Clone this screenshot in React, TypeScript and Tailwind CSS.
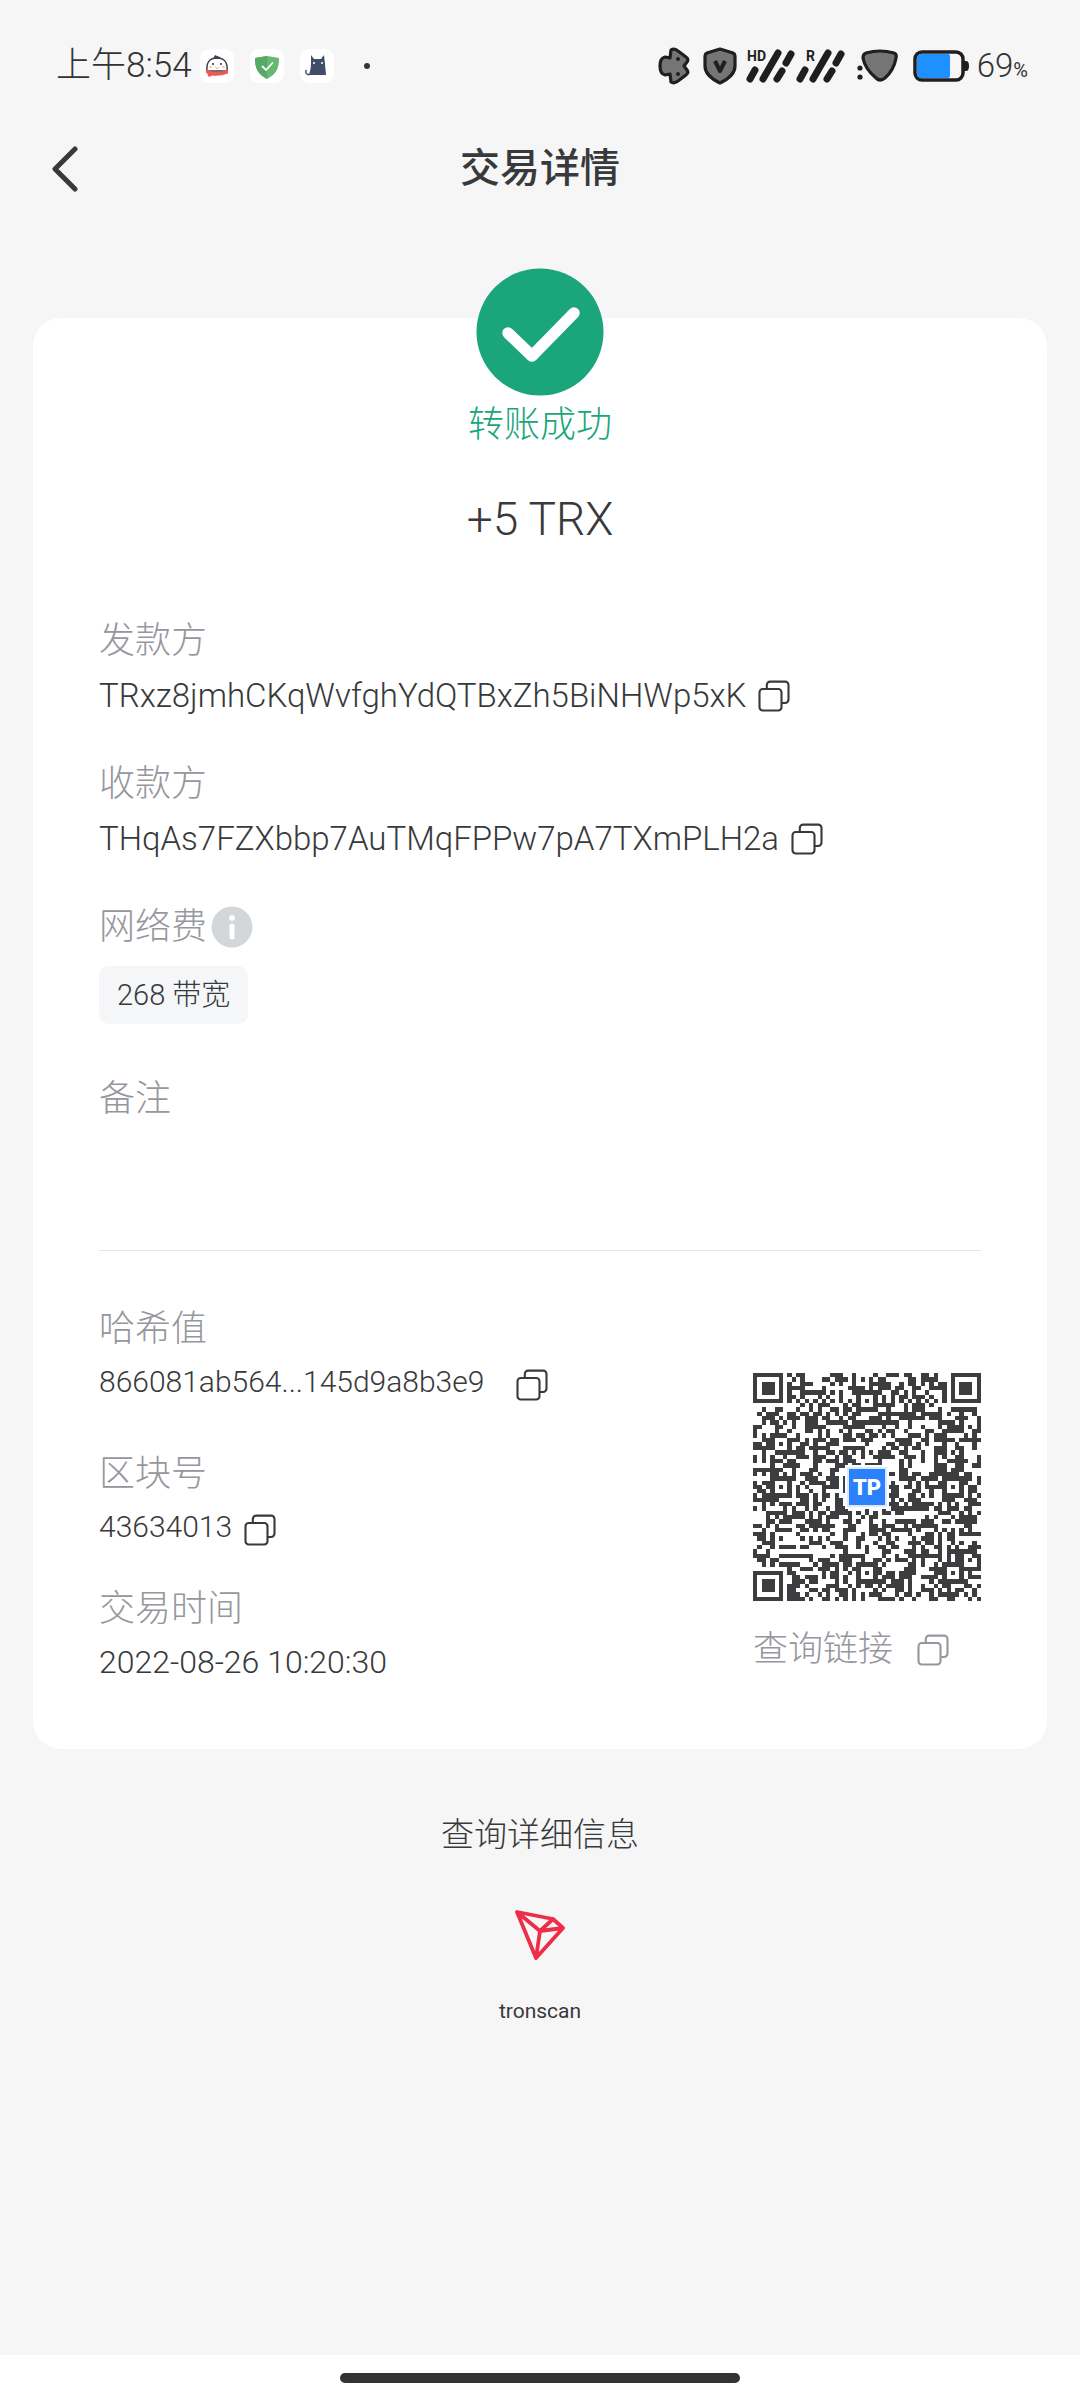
import React from "react";

const SIZE = 53;

function buildCode(): string {
  const grid: boolean[][] = [];
  let seed = 866081;
  for (let y = 0; y < SIZE; y++) {
    const row: boolean[] = [];
    for (let x = 0; x < SIZE; x++) {
      seed = (seed * 1103515245 + 12345) % 2147483648;
      row.push((seed >> 12) % 100 < 52);
    }
    grid.push(row);
  }
  for (let i = 0; i < SIZE; i++) {
    grid[6][i] = i % 2 === 0;
    grid[i][6] = i % 2 === 0;
  }
  const ring = (cx: number, cy: number, outer: number, dark: number[]) => {
    for (let dy = -outer; dy <= outer; dy++) {
      for (let dx = -outer; dx <= outer; dx++) {
        const x = cx + dx;
        const y = cy + dy;
        if (x < 0 || y < 0 || x >= SIZE || y >= SIZE) continue;
        grid[y][x] = dark.includes(Math.max(Math.abs(dx), Math.abs(dy)));
      }
    }
  };
  [[6, 26], [26, 6], [46, 26], [26, 46], [46, 46]].forEach(([x, y]) => ring(x, y, 2, [0, 2]));
  ring(3, 3, 4, [0, 1, 3]);
  ring(SIZE - 4, 3, 4, [0, 1, 3]);
  ring(3, SIZE - 4, 4, [0, 1, 3]);
  let d = "";
  grid.forEach((row, y) =>
    row.forEach((on, x) => {
      if (on) d += `M${x} ${y}h1v1h-1z`;
    }),
  );
  return d;
}

const codePath = buildCode();

function QrCode() {
  return (
    <div className="relative size-[228px]">
      <svg viewBox="0 0 53 53" className="size-full" shapeRendering="crispEdges" role="img" aria-label="查询链接二维码">
        <path d={codePath} fill="#3c3d3f" />
      </svg>
      <div className="absolute inset-0 flex items-center justify-center">
        <span className="flex size-10 items-center justify-center border-2 border-[#d9e9ff] bg-[#2b80fb] text-[22px] font-black text-white outline-2 outline-white">
          TP
        </span>
      </div>
    </div>
  );
}

function CopyButton({ label }: { label: string }) {
  return (
    <button type="button" aria-label={label} className="shrink-0">
      <svg viewBox="0 0 32 32" className="size-8" fill="none" stroke="currentColor" strokeWidth="2.1">
        <rect x="1.5" y="9" width="22" height="21.5" rx="3.2" />
        <path d="M8.8 9V5a3.4 3.4 0 0 1 3.4-3.4h14.9A3.4 3.4 0 0 1 30.5 5v14.6a3.4 3.4 0 0 1-3.4 3.4H23.5" />
      </svg>
    </button>
  );
}

function Signal({ tag }: { tag: string }) {
  return (
    <svg viewBox="0 0 50 36" className="h-9 w-[50px]" stroke="#1f1f1f" strokeWidth="7" strokeLinecap="round">
      <path d="M5 31l5-9M18 31L33 5M32 31l5-8M41 15l5-9" />
      <text x={tag === "R" ? 11 : 2} y="13" fontSize="14" fontWeight="700" fill="#1f1f1f" stroke="none">
        {tag}
      </text>
    </svg>
  );
}

function StatusBar() {
  return (
    <header className="flex h-[132px] items-center justify-between pr-[52px] pl-14 text-[#333]">
      <div className="flex items-center gap-4">
        <span className="-mr-2 text-[35px] font-light">上午8:54</span>
        <svg viewBox="0 0 34 34" className="size-[34px]">
          <rect width="34" height="34" rx="9" fill="#fff" />
          <path d="M7 22C6 13 10 9 17 9s11 4 10 13z" fill="#fff" stroke="#3f3f4d" strokeWidth="1.5" />
          <path d="M13 10l2-4 2 1 3 1 1 2z" fill="#3f3f4d" />
          <circle cx="13" cy="15" r="1" fill="#333" />
          <circle cx="21" cy="15" r="1" fill="#333" />
          <circle cx="10.5" cy="18" r="1.3" fill="#f8c4c4" />
          <circle cx="23.5" cy="18" r="1.3" fill="#f8c4c4" />
          <path d="M14.5 18.5h5L17 20z" fill="#f5c02b" />
          <path d="M6 20.5q11 5 22 0v4q-8 3-16 2l-1 1H8l-.5-3L6 24z" fill="#ee5a4f" />
        </svg>
        <svg viewBox="0 0 34 34" className="size-[34px]">
          <rect width="34" height="34" rx="9" fill="#fff" />
          <path d="M17 7l12 2c0 11-3 16-12 21C8 25 5 20 5 9z" fill="#67b96f" />
          <path d="M17 7v23C8 25 5 20 5 9z" fill="#58a866" />
          <path d="M12 17l4 4 7-7.5" fill="none" stroke="#fff" strokeWidth="1.8" />
        </svg>
        <svg viewBox="0 0 34 34" className="size-[34px]">
          <rect width="34" height="34" rx="9" fill="#fff" />
          <path d="M11 6l3 4h7l3-4 1 9c0 4 1 7 1 11H9c1-4 2-7 2-11z" fill="#414c6b" />
          <path d="M10 25.5H7.5q-3-2-1-4.5" fill="none" stroke="#414c6b" strokeWidth="1.4" />
          <circle cx="14" cy="14" r="1" fill="#fff" />
          <circle cx="22" cy="14" r="1" fill="#fff" />
        </svg>
        <span className="ml-[14px] size-[6px] rounded-full bg-[#333]" />
      </div>
      <div className="flex items-center">
        <svg viewBox="0 0 34 38" className="mr-3 h-[38px] w-[34px]" fill="#757575" stroke="#1f1f1f" strokeWidth="3.2" strokeLinejoin="round">
          <path d="M14 3q3-2 7 1l8 6q3 2 1 5l-3 4 3 4q2 3-1 5l-8 6q-4 3-7 1l-1-8-5 1q-5-1-5-9t5-9l5 1z" />
          <circle cx="21" cy="12" r="2" fill="#1f1f1f" stroke="none" />
          <circle cx="21" cy="27" r="2" fill="#1f1f1f" stroke="none" />
        </svg>
        <svg viewBox="0 0 34 38" className="mr-2 h-[38px] w-[34px]" fill="#757575" stroke="#1f1f1f" strokeWidth="3.2" strokeLinejoin="round">
          <path d="M17 2l13 4q2 1 2 3v10q0 10-15 17Q2 29 2 19V9q0-2 2-3z" />
          <path d="M12 14l5 10 5-10" fill="none" strokeWidth="4" />
        </svg>
        <Signal tag="HD" />
        <Signal tag="R" />
        <svg viewBox="0 0 42 34" className="mr-[14px] ml-3 h-[34px] w-[42px]">
          <path d="M9 4q14-4 28 0 3 1 2 5-2 12-11 20-5 4-9 0Q8 20 6 9q0-4 3-5z" fill="#757575" stroke="#1f1f1f" strokeWidth="3.2" />
          <circle cx="3" cy="19" r="2.6" fill="#1f1f1f" />
          <circle cx="3" cy="28" r="2.6" fill="#1f1f1f" />
        </svg>
        <svg viewBox="0 0 56 32" className="mr-2 h-8 w-14">
          <rect x="2" y="2" width="48" height="28" rx="7" fill="#f6f6f6" stroke="#1f1f1f" strokeWidth="3.5" />
          <path d="M8 4h27q2 0 2 2v20q0 2-2 2H8q-4 0-4-4V8q0-4 4-4z" fill="#1e90ff" />
          <path d="M51 11h2q3 0 3 5t-3 5h-2z" fill="#1f1f1f" />
        </svg>
        <span className="text-[33px] leading-none font-light">
          69<span className="text-xl font-normal">%</span>
        </span>
      </div>
    </header>
  );
}

function Label({ children }: { children: React.ReactNode }) {
  return <dt className="text-[36px] leading-[56px] font-light text-[#96979d]">{children}</dt>;
}

export default function App() {
  return (
    <div className="flex min-h-screen flex-col bg-[#f6f6f6] font-[Roboto,'Noto_Sans_CJK_SC',sans-serif] text-[#38393b]">
      <StatusBar />
      <nav className="grid grid-cols-[1fr_auto_1fr] items-center px-[52px]">
        <button type="button" aria-label="返回" className="justify-self-start">
          <svg viewBox="0 0 28 48" className="h-12 w-7" fill="none" stroke="#38393b" strokeWidth="5" strokeLinecap="round" strokeLinejoin="round">
            <path d="M23 4L3 24l20 20" />
          </svg>
        </button>
        <h1 className="text-[40px] leading-[74px] font-medium">交易详情</h1>
      </nav>

      <main className="mx-[33px] mt-[112px] rounded-[28px] bg-white px-[66px] pb-[62px]">
        <section className="-mt-[50px] flex flex-col items-center">
          <svg viewBox="0 0 128 128" className="size-32">
            <circle cx="64" cy="64" r="63.5" fill="#1aa57a" />
            <path d="M32 65l24 23 42-43" fill="none" stroke="#fff" strokeWidth="11.5" strokeLinecap="round" strokeLinejoin="round" />
          </svg>
          <p className="text-[36px] leading-[58px] font-light text-[#1aa57a]">转账成功</p>
          <p className="mt-[30px] text-[46px] leading-[70px] font-light">+5 TRX</p>
        </section>

        <dl className="mt-[59px]">
          <Label>发款方</Label>
          <dd className="mb-[33px] flex items-center gap-3 text-[33px] leading-[54px] font-light">
            TRxz8jmhCKqWvfghYdQTBxZh5BiNHWp5xK
            <CopyButton label="复制发款方" />
          </dd>
          <Label>收款方</Label>
          <dd className="mb-[33px] flex items-center gap-3 text-[33px] leading-[54px] font-light">
            THqAs7FZXbbp7AuTMqFPPw7pA7TXmPLH2a
            <CopyButton label="复制收款方" />
          </dd>
          <Label>
            <span className="flex items-center gap-1">
              网络费
              <button type="button" aria-label="网络费说明">
                <svg viewBox="0 0 42 42" className="size-[42px]">
                  <circle cx="21" cy="21" r="20.5" fill="#d3d7da" />
                  <circle cx="21" cy="12" r="2.8" fill="#fff" />
                  <path d="M21 20v11" stroke="#fff" strokeWidth="5" strokeLinecap="round" />
                </svg>
              </button>
            </span>
          </Label>
          <dd className="mt-[11px] mb-[47px] w-fit rounded-[10px] bg-[#f5f6f8] px-[18px] text-[29px] leading-[58px] font-light">
            268 带宽
          </dd>
          <Label>备注</Label>
          <dd className="h-[123px]" />
        </dl>

        <hr className="border-[#e5e6e8]" />

        <div className="mt-[50px] flex items-end justify-between">
          <dl>
            <Label>哈希值</Label>
            <dd className="mb-[41px] flex h-12 items-center gap-8 text-[30px] font-light">
              866081ab564...145d9a8b3e9
              <span className="mt-2 flex">
                <CopyButton label="复制哈希值" />
              </span>
            </dd>
            <Label>区块号</Label>
            <dd className="mb-[31px] flex h-12 items-center gap-3 text-[30px] font-light">
              43634013
              <span className="mt-2 flex">
                <CopyButton label="复制区块号" />
              </span>
            </dd>
            <Label>交易时间</Label>
            <dd className="text-[32px] leading-[50px] font-light">2022-08-26 10:20:30</dd>
          </dl>
          <div className="mb-[10px]">
            <QrCode />
            <div className="mt-[22px] flex items-center gap-6 text-[35px] leading-[54px] font-light text-[#96979d]">
              <a href="#tx">查询链接</a>
              <CopyButton label="复制查询链接" />
            </div>
          </div>
        </div>
      </main>

      <footer className="mt-[60px] flex grow flex-col items-center">
        <h2 className="text-[33px] leading-[52px] font-light">查询详细信息</h2>
        <a href="#tronscan" className="mt-[48px] flex flex-col items-center">
          <svg viewBox="0 0 52 52" className="size-[52px]" fill="none" stroke="#ee2e48" strokeWidth="3.8" strokeLinejoin="round" strokeLinecap="round">
            <path d="M3 3l36 7 10 9-27 30zM3 3l23 19 13-12M26 22l23-3M26 22l-4 27" />
          </svg>
          <span className="mt-8 text-[21px] leading-9">tronscan</span>
        </a>
      </footer>
      <div className="flex h-[45px] items-center justify-center bg-white">
        <span className="h-[10px] w-[37%] rounded-full bg-[#333]" />
      </div>
    </div>
  );
}
